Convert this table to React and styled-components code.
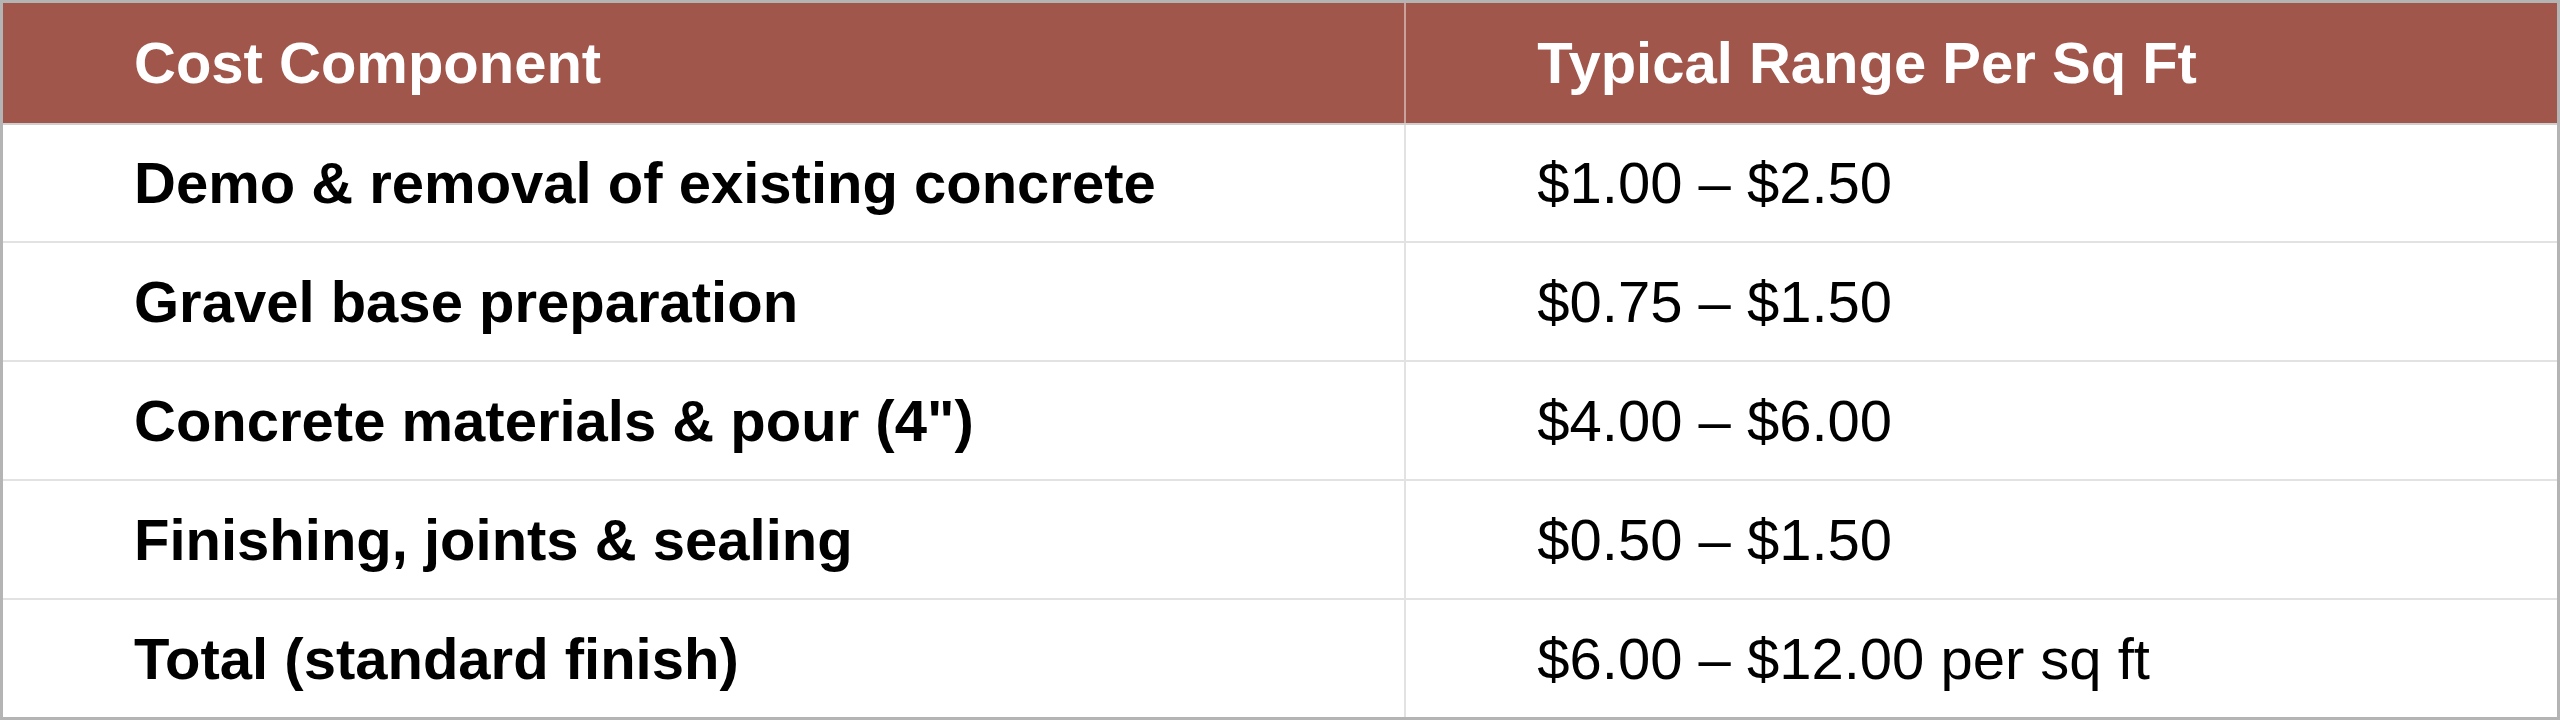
import styled, { createGlobalStyle } from "styled-components";

const GlobalStyle = createGlobalStyle`
  html,
  body {
    margin: 0;
    padding: 0;
    background: #ffffff;
  }
  body {
    font-family: "Liberation Sans", Arial, Helvetica, sans-serif;
  }
`;

const colors = {
  header: "#a1564b",
  outline: "#b4b4b4",
  rule: "#e2e2e2",
  headerRule: "#c9a29c",
  text: "#000000",
};

const Wrapper = styled.div`
  width: 2560px;
  height: 720px;
  box-sizing: border-box;
`;

const Table = styled.table`
  width: 100%;
  height: 100%;
  table-layout: fixed;
  border-collapse: collapse;
  border: 3px solid ${colors.outline};
  font-size: 58px;
  color: ${colors.text};
`;

const Col = styled.col`
  width: ${(p) => p.$width};
`;

const HeadRow = styled.tr`
  height: 122px;
  background: ${colors.header};
`;

const HeadCell = styled.th`
  padding: 0 0 0 131px;
  text-align: left;
  font-weight: 700;
  color: #ffffff;
  border-bottom: 2px solid #cfcfcf;
  & + & {
    border-left: 2px solid ${colors.headerRule};
  }
`;

const Row = styled.tr`
  border-top: 2px solid ${colors.rule};
`;

const Cell = styled.td`
  padding: 0 0 0 131px;
  vertical-align: middle;
  font-weight: ${(p) => (p.$bold ? 700 : 400)};
  white-space: nowrap;
  & + & {
    border-left: 2px solid ${colors.rule};
  }
`;

const rows = [
  { label: "Demo & removal of existing concrete", range: "$1.00 – $2.50" },
  { label: "Gravel base preparation", range: "$0.75 – $1.50" },
  { label: 'Concrete materials & pour (4")', range: "$4.00 – $6.00" },
  { label: "Finishing, joints & sealing", range: "$0.50 – $1.50" },
  { label: "Total (standard finish)", range: "$6.00 – $12.00 per sq ft" },
];

function App() {
  return (
    <Wrapper>
      <GlobalStyle />
      <Table>
        <colgroup>
          <Col $width="54.9%" />
          <Col $width="45.1%" />
        </colgroup>
        <thead>
          <HeadRow>
            <HeadCell>Cost Component</HeadCell>
            <HeadCell>Typical Range Per Sq Ft</HeadCell>
          </HeadRow>
        </thead>
        <tbody>
          {rows.map((r) => (
            <Row key={r.label}>
              <Cell $bold>{r.label}</Cell>
              <Cell>{r.range}</Cell>
            </Row>
          ))}
        </tbody>
      </Table>
    </Wrapper>
  );
}

export default App;
